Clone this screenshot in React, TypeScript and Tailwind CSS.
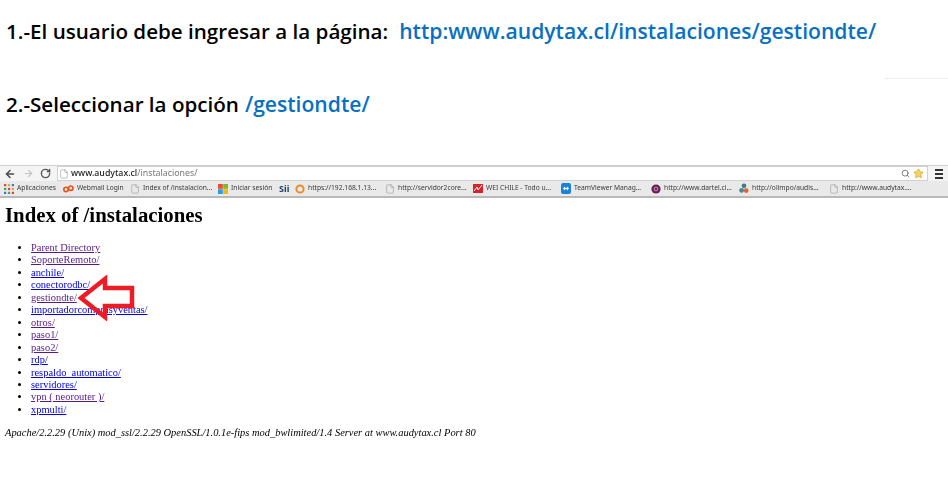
import type { ReactNode } from 'react';
import { ArrowLeft, ArrowRight, File, RotateCw, Search, Star } from 'lucide-react';

const directoryLinks: { label: string; visited: boolean }[] = [
  { label: 'Parent Directory', visited: true },
  { label: 'SoporteRemoto/', visited: true },
  { label: 'anchile/', visited: false },
  { label: 'conectorodbc/', visited: false },
  { label: 'gestiondte/', visited: true },
  { label: 'importadorcomprasyventas/', visited: false },
  { label: 'otros/', visited: true },
  { label: 'paso1/', visited: true },
  { label: 'paso2/', visited: true },
  { label: 'rdp/', visited: false },
  { label: 'respaldo_automatico/', visited: false },
  { label: 'servidores/', visited: false },
  { label: 'vpn ( neorouter )/', visited: true },
  { label: 'xpmulti/', visited: false }
];

const DocIcon = () => <File className="h-[10px] w-[10px] shrink-0 text-[#9a9a9a]" strokeWidth={1.5} />;

const AppsIcon = () => (
  <svg width="10" height="10" viewBox="0 0 9 9" className="shrink-0">
    <rect x="0" y="0" width="2" height="2" fill="#d9453a" />
    <rect x="3.5" y="0" width="2" height="2" fill="#e8a33a" />
    <rect x="7" y="0" width="2" height="2" fill="#3b78d8" />
    <rect x="0" y="3.5" width="2" height="2" fill="#4a9d5b" />
    <rect x="3.5" y="3.5" width="2" height="2" fill="#d9453a" />
    <rect x="7" y="3.5" width="2" height="2" fill="#e8a33a" />
    <rect x="0" y="7" width="2" height="2" fill="#3b78d8" />
    <rect x="3.5" y="7" width="2" height="2" fill="#4a9d5b" />
    <rect x="7" y="7" width="2" height="2" fill="#d9453a" />
  </svg>
);

const WebmailIcon = () => (
  <svg width="11" height="8" viewBox="0 0 11 8" className="shrink-0">
    <circle cx="3" cy="4.5" r="2.2" fill="none" stroke="#e2541b" strokeWidth="1.6" />
    <circle cx="7.8" cy="3.2" r="2.2" fill="none" stroke="#e2541b" strokeWidth="1.6" />
  </svg>
);

const WindowsIcon = () => (
  <svg width="10" height="10" viewBox="0 0 10 10" className="shrink-0">
    <rect x="0" y="0" width="4.8" height="4.8" fill="#e8502a" />
    <rect x="5.2" y="0" width="4.8" height="4.8" fill="#7fba2a" />
    <rect x="0" y="5.2" width="4.8" height="4.8" fill="#2a9fe8" />
    <rect x="5.2" y="5.2" width="4.8" height="4.8" fill="#f5b915" />
  </svg>
);

const RingIcon = () => (
  <svg width="10" height="10" viewBox="0 0 10 10" className="shrink-0">
    <circle cx="5" cy="5" r="3.6" fill="none" stroke="#ee8a2c" strokeWidth="2" />
  </svg>
);

const WeiIcon = () => (
  <svg width="10" height="9" viewBox="0 0 10 9" className="shrink-0">
    <rect width="10" height="9" fill="#d8232a" />
    <path d="M1 7 L4 3 L5 6 L9 1" fill="none" stroke="#ffffff" strokeWidth="1" />
  </svg>
);

const TeamViewerIcon = () => (
  <svg width="10" height="11" viewBox="0 0 10 11" className="shrink-0">
    <rect width="10" height="11" rx="2" fill="#1b83d6" />
    <path d="M2 5.5 L4 3.5 V4.8 H6 V3.5 L8 5.5 L6 7.5 V6.2 H4 V7.5 Z" fill="#ffffff" />
  </svg>
);

const DartelIcon = () => (
  <svg width="10" height="10" viewBox="0 0 10 10" className="shrink-0">
    <circle cx="5" cy="5" r="4.6" fill="#6e1f56" />
    <circle cx="5" cy="5" r="1.8" fill="none" stroke="#d9b8cf" strokeWidth="0.8" />
  </svg>
);

const OlimpoIcon = () => (
  <svg width="10" height="11" viewBox="0 0 10 11" className="shrink-0">
    <circle cx="5" cy="2.8" r="2.4" fill="#3f7f8c" />
    <circle cx="2.6" cy="7.4" r="2.4" fill="#4d8a92" />
    <circle cx="7.2" cy="7.6" r="2.4" fill="#e2603a" />
  </svg>
);

type BookmarkProps = {
  icon: ReactNode;
  label?: string;
  className: string;
};

function Bookmark({ icon, label, className }: BookmarkProps) {
  return (
    <div className={`flex shrink-0 items-center gap-[3px] ${className}`}>
      {icon}
      {label ? <span className="whitespace-nowrap">{label}</span> : null}
    </div>
  );
}

function BrowserChrome() {
  return (
    <div className="blur-[0.5px]">
      <div className="flex h-[16px] items-center border-t border-[#cfcfcf] bg-[#f4f4f4] pl-[4px] pr-[5px]">
        <ArrowLeft className="h-[12px] w-[12px] text-[#4a4a4a]" strokeWidth={3} />
        <ArrowRight className="ml-[7px] h-[11px] w-[11px] text-[#c4c4c4]" strokeWidth={2.5} />
        <RotateCw className="ml-[6px] h-[11px] w-[11px] text-[#555555]" strokeWidth={3} />
        <div className="ml-[6px] flex h-[15px] w-[871px] items-center border border-[#d0d0d0] bg-white pl-[1px] pr-[3px]">
          <DocIcon />
          <span className="ml-[2px] text-[8.8px] font-medium leading-none text-[#222222] [font-family:'Noto_Sans',sans-serif]">
            www.audytax.cl
          </span>
          <span className="text-[8.8px] leading-none text-[#777777] [font-family:'Noto_Sans',sans-serif]">
            /instalaciones/
          </span>
          <Search className="ml-auto h-[9px] w-[9px] text-[#777777]" strokeWidth={2.5} />
          <Star className="ml-[3px] h-[11px] w-[11px] fill-[#f7d25e] text-[#c9a227]" strokeWidth={1.5} />
        </div>
        <div className="ml-[7px] flex w-[8px] flex-col gap-[2px]">
          <div className="h-[2px] bg-[#333333]" />
          <div className="h-[2px] bg-[#333333]" />
          <div className="h-[2px] bg-[#333333]" />
        </div>
      </div>
      <div className="flex h-[17px] items-center border-b-2 border-[#b9b9b9] bg-[#e9e9e9] pl-[4px] text-[6.7px] leading-none text-[#3a3a3a] [font-family:'Noto_Sans',sans-serif]">
        <Bookmark icon={<AppsIcon />} label="Aplicaciones" className="w-[59px]" />
        <Bookmark icon={<WebmailIcon />} label="Webmail Login" className="w-[67px]" />
        <Bookmark icon={<DocIcon />} label="Index of /instalacion..." className="w-[88px]" />
        <Bookmark icon={<WindowsIcon />} label="Iniciar sesión" className="w-[61px]" />
        <Bookmark icon={<span className="text-[9px] font-bold text-[#1d3f66]">Sii</span>} className="w-[16px]" />
        <Bookmark icon={<RingIcon />} label="https://192.168.1.13..." className="w-[90px]" />
        <Bookmark icon={<DocIcon />} label="http://servidor2core..." className="w-[88px]" />
        <Bookmark icon={<WeiIcon />} label="WEI CHILE - Todo u..." className="w-[88px]" />
        <Bookmark icon={<TeamViewerIcon />} label="TeamViewer Manag..." className="w-[90px]" />
        <Bookmark icon={<DartelIcon />} label="http://www.dartel.cl..." className="w-[88px]" />
        <Bookmark icon={<OlimpoIcon />} label="http://olimpo/audis..." className="w-[90px]" />
        <Bookmark icon={<DocIcon />} label="http://www.audytax...." className="w-[88px]" />
      </div>
    </div>
  );
}

function RedArrow() {
  return (
    <svg width="60" height="46" viewBox="0 0 60 46" className="absolute left-[77px] top-[275px]">
      <path
        d="M4 23 L28 4 V13 H55 V31 H28 V42 Z"
        fill="none"
        stroke="#ed1c24"
        strokeWidth="4.5"
        strokeLinejoin="miter"
      />
    </svg>
  );
}

export default function App() {
  return (
    <div className="relative h-[480px] w-[948px] overflow-hidden bg-white text-black">
      <div className="h-[165px] font-semibold [font-family:'Open_Sans',sans-serif]">
        <div className="flex h-[62px] items-center pl-[6px] text-[20.6px]">
          <span className="whitespace-pre">1.-El usuario debe ingresar a la página:</span>
          <span className="ml-[11px] text-[21.1px] text-[#0870c4]">http:www.audytax.cl/instalaciones/gestiondte/</span>
        </div>
        <div className="ml-auto h-px w-[64px] translate-y-[16px] bg-[#eeeeee]" />
        <div className="mt-[10px] flex h-[62px] items-center pl-[6px] text-[20.6px]">
          <span className="whitespace-pre">2.-Seleccionar la opción</span>
          <span className="ml-[6px] text-[21.1px] text-[#0870c4]">/gestiondte/</span>
        </div>
      </div>

      <BrowserChrome />

      <div className="pl-[5px] pt-[5px] blur-[0.5px] [font-family:'Liberation_Serif',serif]">
        <h1 className="text-[20.8px] font-bold leading-[23px]">Index of /instalaciones</h1>
        <ul className="mt-[16px] list-disc pl-[26px] text-[10.45px] leading-[12.45px]">
          {directoryLinks.map((link) => (
            <li key={link.label}>
              <a href="#" className={link.visited ? 'text-[#551a8b] underline' : 'text-[#0000ee] underline'}>
                {link.label}
              </a>
            </li>
          ))}
        </ul>
        <address className="mt-[10px] text-[10.45px] italic leading-[13px]">
          Apache/2.2.29 (Unix) mod_ssl/2.2.29 OpenSSL/1.0.1e-fips mod_bwlimited/1.4 Server at www.audytax.cl Port 80
        </address>
      </div>

      <RedArrow />
    </div>
  );
}
